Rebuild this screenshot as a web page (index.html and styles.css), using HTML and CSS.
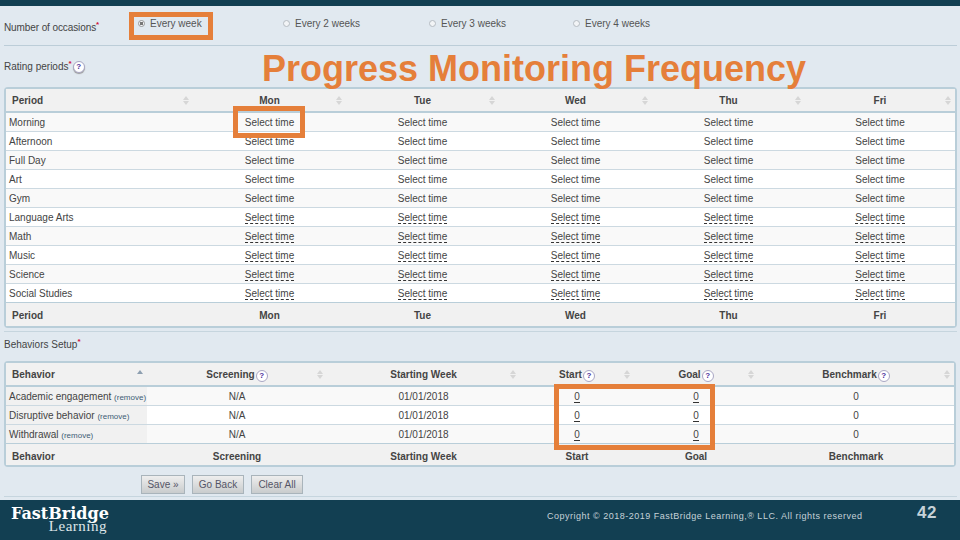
FILE: index.html
```html
<!DOCTYPE html>
<html lang="en">
<head>
  <meta charset="UTF-8">
  <title>Progress Monitoring Frequency</title>
  <link rel="stylesheet" href="styles.css">
</head>
<body>
  <div class="top-bar"></div>

  <main class="content">
    <div class="occasions">
      <div class="field-label occasions-label">Number of occasions<sup class="req">*</sup></div>
      <label class="option opt-1"><span class="radio checked"></span>Every week</label>
      <label class="option opt-2"><span class="radio"></span>Every 2 weeks</label>
      <label class="option opt-3"><span class="radio"></span>Every 3 weeks</label>
      <label class="option opt-4"><span class="radio"></span>Every 4 weeks</label>
    </div>

    <div class="rating">
      <div class="field-label">Rating periods<sup class="req">*</sup></div>
      <span class="help help-big">?</span>
    </div>

    <table class="grid periods">
      <colgroup>
        <col class="c-period"><col class="c-day"><col class="c-day"><col class="c-day"><col class="c-day"><col class="c-last">
      </colgroup>
      <thead>
        <tr>
          <th class="left">Period<span class="sort"></span></th>
          <th>Mon<span class="sort"></span></th>
          <th>Tue<span class="sort"></span></th>
          <th>Wed<span class="sort"></span></th>
          <th>Thu<span class="sort"></span></th>
          <th>Fri<span class="sort"></span></th>
        </tr>
      </thead>
      <tbody>
        <tr><td class="left">Morning</td><td>Select time</td><td>Select time</td><td>Select time</td><td>Select time</td><td>Select time</td></tr>
        <tr><td class="left">Afternoon</td><td>Select time</td><td>Select time</td><td>Select time</td><td>Select time</td><td>Select time</td></tr>
        <tr><td class="left">Full Day</td><td>Select time</td><td>Select time</td><td>Select time</td><td>Select time</td><td>Select time</td></tr>
        <tr><td class="left">Art</td><td>Select time</td><td>Select time</td><td>Select time</td><td>Select time</td><td>Select time</td></tr>
        <tr><td class="left">Gym</td><td>Select time</td><td>Select time</td><td>Select time</td><td>Select time</td><td>Select time</td></tr>
        <tr><td class="left">Language Arts</td><td><a class="edit">Select time</a></td><td><a class="edit">Select time</a></td><td><a class="edit">Select time</a></td><td><a class="edit">Select time</a></td><td><a class="edit">Select time</a></td></tr>
        <tr><td class="left">Math</td><td><a class="edit">Select time</a></td><td><a class="edit">Select time</a></td><td><a class="edit">Select time</a></td><td><a class="edit">Select time</a></td><td><a class="edit">Select time</a></td></tr>
        <tr><td class="left">Music</td><td><a class="edit">Select time</a></td><td><a class="edit">Select time</a></td><td><a class="edit">Select time</a></td><td><a class="edit">Select time</a></td><td><a class="edit">Select time</a></td></tr>
        <tr><td class="left">Science</td><td><a class="edit">Select time</a></td><td><a class="edit">Select time</a></td><td><a class="edit">Select time</a></td><td><a class="edit">Select time</a></td><td><a class="edit">Select time</a></td></tr>
        <tr><td class="left">Social Studies</td><td><a class="edit">Select time</a></td><td><a class="edit">Select time</a></td><td><a class="edit">Select time</a></td><td><a class="edit">Select time</a></td><td><a class="edit">Select time</a></td></tr>
      </tbody>
      <tfoot>
        <tr><th class="left">Period</th><th>Mon</th><th>Tue</th><th>Wed</th><th>Thu</th><th>Fri</th></tr>
      </tfoot>
    </table>

    <div class="behaviors-head">
      <div class="field-label">Behaviors Setup<sup class="req">*</sup></div>
    </div>

    <table class="grid behaviors">
      <colgroup>
        <col class="c-beh"><col class="c-screen"><col class="c-week"><col class="c-start"><col class="c-goal"><col class="c-bench">
      </colgroup>
      <thead>
        <tr>
          <th class="left">Behavior<span class="sort asc"></span></th>
          <th>Screening<span class="help">?</span><span class="sort"></span></th>
          <th>Starting Week<span class="sort"></span></th>
          <th>Start<span class="help">?</span><span class="sort"></span></th>
          <th>Goal<span class="help">?</span><span class="sort"></span></th>
          <th>Benchmark<span class="help">?</span><span class="sort"></span></th>
        </tr>
      </thead>
      <tbody>
        <tr><td class="left sorted">Academic engagement <a class="remove">(remove)</a></td><td>N/A</td><td>01/01/2018</td><td><a class="edit">0</a></td><td><a class="edit">0</a></td><td>0</td></tr>
        <tr><td class="left sorted">Disruptive behavior <a class="remove">(remove)</a></td><td>N/A</td><td>01/01/2018</td><td><a class="edit">0</a></td><td><a class="edit">0</a></td><td>0</td></tr>
        <tr><td class="left sorted">Withdrawal <a class="remove">(remove)</a></td><td>N/A</td><td>01/01/2018</td><td><a class="edit">0</a></td><td><a class="edit">0</a></td><td>0</td></tr>
      </tbody>
      <tfoot>
        <tr><th class="left">Behavior</th><th>Screening</th><th>Starting Week</th><th>Start</th><th>Goal</th><th>Benchmark</th></tr>
      </tfoot>
    </table>

    <div class="actions">
      <button class="btn">Save »</button>
      <button class="btn">Go Back</button>
      <button class="btn">Clear All</button>
    </div>

    <h1 class="slide-title">Progress Monitoring Frequency</h1>
    <div class="callout call-week"></div>
    <div class="callout call-time"></div>
    <div class="callout call-values"></div>
  </main>

  <footer class="footer">
    <div class="logo">
      <div class="logo-top">FastBridge</div>
      <div class="logo-bottom">Learning</div>
    </div>
    <div class="copyright">Copyright © 2018-2019 FastBridge Learning,® LLC. All rights reserved</div>
    <div class="page-num">42</div>
  </footer>
</body>
</html>
```

FILE: styles.css
```css
* {
  box-sizing: border-box;
}

html, body {
  margin: 0;
  height: 540px;
  overflow: hidden;
}

body {
  display: flex;
  flex-direction: column;
  background: #e1e9f0;
  color: #3a3a3a;
  font-family: "Liberation Sans", Arial, sans-serif;
  font-size: 10px;
}

.top-bar {
  height: 6px;
  background: #123f52;
}

.content {
  position: relative;
  flex: 1;
  padding: 0 3px 0 4px;
}

.field-label {
  font-size: 10px;
  color: #444;
}

.req {
  color: #d0103a;
  font-size: 8px;
  font-weight: bold;
  line-height: 0;
}

.occasions {
  display: flex;
  height: 40px;
  border-bottom: 1px solid #bccdd8;
}

.occasions-label {
  width: 134px;
  padding-top: 16px;
  letter-spacing: -0.1px;
}

.option {
  display: flex;
  align-items: center;
  height: 12px;
  margin-top: 11px;
  font-size: 10px;
  color: #555;
}

.opt-1 { width: 145px; }
.opt-2 { width: 146px; }
.opt-3 { width: 144px; }

.radio {
  width: 7px;
  height: 7px;
  margin-right: 5px;
  border: 1px solid #b5bcc2;
  border-radius: 50%;
  background: #f2f4f6;
}

.radio.checked {
  background: radial-gradient(#777 0 1.5px, #f2f4f6 2px);
  border-color: #999;
}

.rating {
  display: flex;
  align-items: center;
  gap: 1px;
  height: 41px;
}

.help {
  display: inline-block;
  width: 12px;
  height: 12px;
  margin: -3px 0 -3px 1px;
  border: 1px solid #a9a7c4;
  border-radius: 50%;
  background: #fff;
  color: #4a2f9c;
  font-size: 8px;
  font-weight: bold;
  line-height: 10px;
  text-align: center;
  vertical-align: 0;
}

.help-big {
  margin: 0;
  box-shadow: 0 1px 1px #999;
}

.grid {
  table-layout: fixed;
  border-collapse: separate;
  border-spacing: 0;
  border: 2px solid #b9ced9;
  border-radius: 4px;
  background: #fff;
}

.periods { width: 953px; }
.behaviors { width: 952px; }

.c-period { width: 187px; }
.c-day { width: 153px; }
.c-last { width: 150px; }

.c-beh { width: 141px; }
.c-screen { width: 180px; }
.c-week { width: 193px; }
.c-start { width: 114px; }
.c-goal { width: 124px; }
.c-bench { width: 196px; }

.grid th,
.grid td {
  padding: 0;
  text-align: center;
  white-space: nowrap;
}

.grid th {
  position: relative;
  background: #f1f1f1;
  color: #444;
  font-size: 10px;
}

.grid thead th {
  height: 24px;
  border-bottom: 2px solid #b9ced9;
}

.grid tfoot th {
  height: 24px;
  padding-top: 1px;
  border-top: 1px solid #b9ced9;
}

.behaviors tfoot th {
  height: 22px;
  padding-top: 4px;
}

.grid td {
  height: 19px;
  border-bottom: 1px solid #ccd9e1;
  color: #444;
}

.grid tbody tr:nth-child(odd) td {
  background: #f9f9f9;
}

.grid tbody tr:last-child td {
  border-bottom: 0;
  height: 18px;
}

.grid .left {
  padding-left: 3px;
  text-align: left;
}

.grid th.left {
  padding-left: 6px;
}

.grid tbody tr td.sorted {
  background: #f1f1f1;
}

.edit {
  border-bottom: 1px dashed #333;
}

.remove {
  font-size: 8px;
  color: #3d5d75;
}

.sort {
  position: absolute;
  top: 7px;
  right: 4px;
  width: 6px;
  height: 9px;
}

.sort::before,
.sort::after {
  content: "";
  position: absolute;
  left: 0;
  border-left: 3px solid transparent;
  border-right: 3px solid transparent;
}

.sort::before {
  top: 0;
  border-bottom: 4px solid #d6d6d6;
}

.sort::after {
  bottom: 0;
  border-top: 4px solid #d6d6d6;
}

.sort.asc::before {
  border-bottom-color: #8d9fb0;
}

.sort.asc::after {
  display: none;
}

.behaviors-head {
  height: 30px;
  margin-top: 3px;
  padding-top: 7px;
  border-top: 1px solid #c6d5de;
}

.actions {
  display: flex;
  gap: 7px;
  height: 30px;
  padding: 8px 0 0 137px;
  border-bottom: 1px solid #c6d5de;
}

.btn {
  height: 19px;
  padding: 0;
  border: 1px solid #a9b4bb;
  background: linear-gradient(#eeeeee, #c9cccd);
  color: #556;
  font-family: inherit;
  font-size: 10px;
  white-space: nowrap;
}

.btn:nth-child(1) { width: 44px; }
.btn:nth-child(2) { width: 52px; }
.btn:nth-child(3) { width: 52px; }

/* slide annotations on top of the screenshot */
.slide-title {
  position: absolute;
  top: 44px;
  left: 262px;
  margin: 0;
  color: #e57f3a;
  font-size: 36px;
  font-weight: bold;
  line-height: 38px;
  white-space: nowrap;
}

.callout {
  position: absolute;
  border: 5px solid #e57f3a;
}

.call-week {
  top: 6px;
  left: 129px;
  width: 84px;
  height: 28px;
}

.call-time {
  top: 100px;
  left: 233px;
  width: 72px;
  height: 32px;
}

.call-values {
  top: 378px;
  left: 554px;
  width: 161px;
  height: 66px;
}

.footer {
  display: flex;
  align-items: flex-start;
  height: 40px;
  padding-left: 11px;
  background: #123f52;
  color: #c6d2d8;
}

.logo {
  width: 96px;
  padding-top: 6px;
  color: #fff;
  text-align: right;
}

.logo-top {
  font-family: "DejaVu Serif", serif;
  font-size: 16px;
  font-weight: bold;
  line-height: 15px;
  white-space: nowrap;
}

.logo-bottom {
  font-family: "Liberation Serif", serif;
  font-size: 15px;
  line-height: 11px;
  letter-spacing: 0.5px;
  color: #dfe6e9;
}

.copyright {
  margin-left: 440px;
  padding-top: 11px;
  width: 370px;
  font-size: 9px;
  letter-spacing: 0.5px;
  white-space: nowrap;
}

.page-num {
  padding-top: 3px;
  font-size: 17px;
  font-weight: bold;
  letter-spacing: 0.5px;
}
```
